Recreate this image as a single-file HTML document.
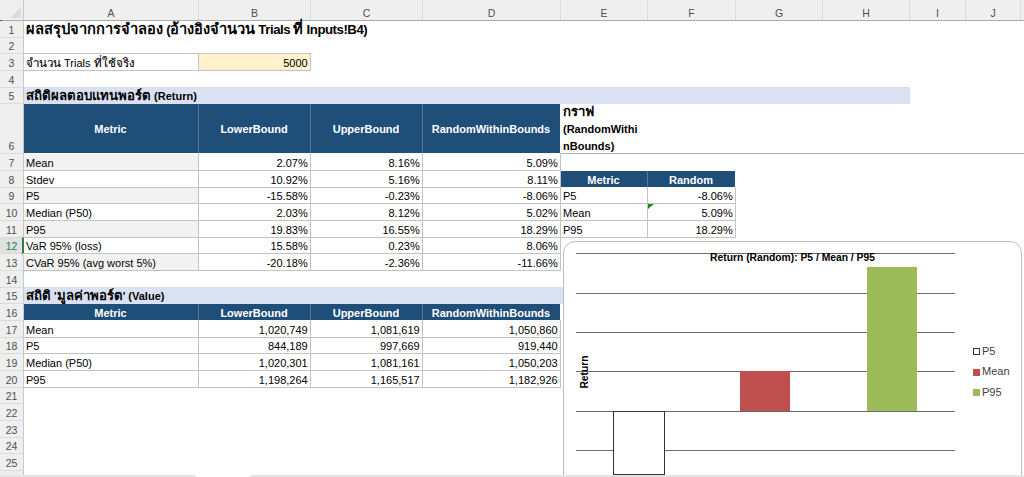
<!DOCTYPE html>
<html><head><meta charset="utf-8"><style>
html,body{margin:0;padding:0;width:1024px;height:477px;overflow:hidden;background:#fff;font-family:"Liberation Sans",sans-serif;}
.th{font-size:1.05em;-webkit-text-stroke:0.12px}
.b .th{font-size:1.2em;-webkit-text-stroke:0}
.lt{font-size:13.2px;letter-spacing:-0.45px}
#r{position:relative;width:1024px;height:477px;overflow:hidden}
</style></head><body><div id="r">
<div style="position:absolute;left:0px;top:0px;width:1024px;height:20px;background:#EFEFEF;"></div>
<div style="position:absolute;left:0px;top:20px;width:23px;height:457px;background:#EFEFEF;"></div>
<svg style="position:absolute;left:0;top:0" width="24" height="20"><polygon points="21,7 21,18 10,18" fill="#DCDCDC"/></svg>
<div style="position:absolute;left:0px;top:20px;width:1024px;height:1px;background:#ABABAB;"></div>
<div style="position:absolute;left:23px;top:0px;width:1px;height:477px;background:#C8C8C8;"></div>
<div style="position:absolute;left:0px;top:20px;width:2px;height:1px;background:#555;"></div>
<div style="position:absolute;left:198px;top:0px;width:1px;height:20px;background:#DCDCDC;"></div>
<div class="" style="position:absolute;left:23.5px;width:175.0px;text-align:center;top:3.36px;line-height:20px;height:20px;font-size:10.5px;font-weight:normal;color:#505050;white-space:nowrap;letter-spacing:0px;">A</div>
<div style="position:absolute;left:310px;top:0px;width:1px;height:20px;background:#DCDCDC;"></div>
<div class="" style="position:absolute;left:198.5px;width:112.0px;text-align:center;top:3.36px;line-height:20px;height:20px;font-size:10.5px;font-weight:normal;color:#505050;white-space:nowrap;letter-spacing:0px;">B</div>
<div style="position:absolute;left:422px;top:0px;width:1px;height:20px;background:#DCDCDC;"></div>
<div class="" style="position:absolute;left:310.5px;width:112.0px;text-align:center;top:3.36px;line-height:20px;height:20px;font-size:10.5px;font-weight:normal;color:#505050;white-space:nowrap;letter-spacing:0px;">C</div>
<div style="position:absolute;left:560px;top:0px;width:1px;height:20px;background:#DCDCDC;"></div>
<div class="" style="position:absolute;left:422.5px;width:138.0px;text-align:center;top:3.36px;line-height:20px;height:20px;font-size:10.5px;font-weight:normal;color:#505050;white-space:nowrap;letter-spacing:0px;">D</div>
<div style="position:absolute;left:647px;top:0px;width:1px;height:20px;background:#DCDCDC;"></div>
<div class="" style="position:absolute;left:560.5px;width:87.0px;text-align:center;top:3.36px;line-height:20px;height:20px;font-size:10.5px;font-weight:normal;color:#505050;white-space:nowrap;letter-spacing:0px;">E</div>
<div style="position:absolute;left:735px;top:0px;width:1px;height:20px;background:#DCDCDC;"></div>
<div class="" style="position:absolute;left:647.5px;width:88.0px;text-align:center;top:3.36px;line-height:20px;height:20px;font-size:10.5px;font-weight:normal;color:#505050;white-space:nowrap;letter-spacing:0px;">F</div>
<div style="position:absolute;left:822px;top:0px;width:1px;height:20px;background:#DCDCDC;"></div>
<div class="" style="position:absolute;left:735.5px;width:87.0px;text-align:center;top:3.36px;line-height:20px;height:20px;font-size:10.5px;font-weight:normal;color:#505050;white-space:nowrap;letter-spacing:0px;">G</div>
<div style="position:absolute;left:909px;top:0px;width:1px;height:20px;background:#DCDCDC;"></div>
<div class="" style="position:absolute;left:822.5px;width:87.0px;text-align:center;top:3.36px;line-height:20px;height:20px;font-size:10.5px;font-weight:normal;color:#505050;white-space:nowrap;letter-spacing:0px;">H</div>
<div style="position:absolute;left:965px;top:0px;width:1px;height:20px;background:#DCDCDC;"></div>
<div class="" style="position:absolute;left:909.5px;width:56.0px;text-align:center;top:3.36px;line-height:20px;height:20px;font-size:10.5px;font-weight:normal;color:#505050;white-space:nowrap;letter-spacing:0px;">I</div>
<div style="position:absolute;left:1020px;top:0px;width:1px;height:20px;background:#DCDCDC;"></div>
<div class="" style="position:absolute;left:965.5px;width:55.0px;text-align:center;top:3.36px;line-height:20px;height:20px;font-size:10.5px;font-weight:normal;color:#505050;white-space:nowrap;letter-spacing:0px;">J</div>
<div style="position:absolute;left:0px;top:37px;width:23px;height:1px;background:#DCDCDC;"></div>
<div class="" style="position:absolute;left:0px;width:23px;text-align:center;top:20.06px;line-height:20px;height:20px;font-size:10.5px;font-weight:normal;color:#505050;white-space:nowrap;letter-spacing:0px;">1</div>
<div style="position:absolute;left:0px;top:53px;width:23px;height:1px;background:#DCDCDC;"></div>
<div class="" style="position:absolute;left:0px;width:23px;text-align:center;top:36.06px;line-height:20px;height:20px;font-size:10.5px;font-weight:normal;color:#505050;white-space:nowrap;letter-spacing:0px;">2</div>
<div style="position:absolute;left:0px;top:70px;width:23px;height:1px;background:#DCDCDC;"></div>
<div class="" style="position:absolute;left:0px;width:23px;text-align:center;top:53.06px;line-height:20px;height:20px;font-size:10.5px;font-weight:normal;color:#505050;white-space:nowrap;letter-spacing:0px;">3</div>
<div style="position:absolute;left:0px;top:87px;width:23px;height:1px;background:#DCDCDC;"></div>
<div class="" style="position:absolute;left:0px;width:23px;text-align:center;top:70.06px;line-height:20px;height:20px;font-size:10.5px;font-weight:normal;color:#505050;white-space:nowrap;letter-spacing:0px;">4</div>
<div style="position:absolute;left:0px;top:103px;width:23px;height:1px;background:#DCDCDC;"></div>
<div class="" style="position:absolute;left:0px;width:23px;text-align:center;top:86.06px;line-height:20px;height:20px;font-size:10.5px;font-weight:normal;color:#505050;white-space:nowrap;letter-spacing:0px;">5</div>
<div style="position:absolute;left:0px;top:153px;width:23px;height:1px;background:#DCDCDC;"></div>
<div class="" style="position:absolute;left:0px;width:23px;text-align:center;top:136.06px;line-height:20px;height:20px;font-size:10.5px;font-weight:normal;color:#505050;white-space:nowrap;letter-spacing:0px;">6</div>
<div style="position:absolute;left:0px;top:170px;width:23px;height:1px;background:#DCDCDC;"></div>
<div class="" style="position:absolute;left:0px;width:23px;text-align:center;top:153.06px;line-height:20px;height:20px;font-size:10.5px;font-weight:normal;color:#505050;white-space:nowrap;letter-spacing:0px;">7</div>
<div style="position:absolute;left:0px;top:187px;width:23px;height:1px;background:#DCDCDC;"></div>
<div class="" style="position:absolute;left:0px;width:23px;text-align:center;top:170.06px;line-height:20px;height:20px;font-size:10.5px;font-weight:normal;color:#505050;white-space:nowrap;letter-spacing:0px;">8</div>
<div style="position:absolute;left:0px;top:203px;width:23px;height:1px;background:#DCDCDC;"></div>
<div class="" style="position:absolute;left:0px;width:23px;text-align:center;top:186.06px;line-height:20px;height:20px;font-size:10.5px;font-weight:normal;color:#505050;white-space:nowrap;letter-spacing:0px;">9</div>
<div style="position:absolute;left:0px;top:220px;width:23px;height:1px;background:#DCDCDC;"></div>
<div class="" style="position:absolute;left:0px;width:23px;text-align:center;top:203.06px;line-height:20px;height:20px;font-size:10.5px;font-weight:normal;color:#505050;white-space:nowrap;letter-spacing:0px;">10</div>
<div style="position:absolute;left:0px;top:237px;width:23px;height:1px;background:#DCDCDC;"></div>
<div class="" style="position:absolute;left:0px;width:23px;text-align:center;top:220.06px;line-height:20px;height:20px;font-size:10.5px;font-weight:normal;color:#505050;white-space:nowrap;letter-spacing:0px;">11</div>
<div style="position:absolute;left:0px;top:253px;width:23px;height:1px;background:#DCDCDC;"></div>
<div style="position:absolute;left:0px;top:238px;width:23px;height:15px;background:#E1E1E1;"></div>
<div class="" style="position:absolute;left:0px;width:23px;text-align:center;top:236.06px;line-height:20px;height:20px;font-size:10.5px;font-weight:normal;color:#2A7F4F;white-space:nowrap;letter-spacing:0px;">12</div>
<div style="position:absolute;left:0px;top:270px;width:23px;height:1px;background:#DCDCDC;"></div>
<div class="" style="position:absolute;left:0px;width:23px;text-align:center;top:253.06px;line-height:20px;height:20px;font-size:10.5px;font-weight:normal;color:#505050;white-space:nowrap;letter-spacing:0px;">13</div>
<div style="position:absolute;left:0px;top:287px;width:23px;height:1px;background:#DCDCDC;"></div>
<div class="" style="position:absolute;left:0px;width:23px;text-align:center;top:270.06px;line-height:20px;height:20px;font-size:10.5px;font-weight:normal;color:#505050;white-space:nowrap;letter-spacing:0px;">14</div>
<div style="position:absolute;left:0px;top:303px;width:23px;height:1px;background:#DCDCDC;"></div>
<div class="" style="position:absolute;left:0px;width:23px;text-align:center;top:286.06px;line-height:20px;height:20px;font-size:10.5px;font-weight:normal;color:#505050;white-space:nowrap;letter-spacing:0px;">15</div>
<div style="position:absolute;left:0px;top:320px;width:23px;height:1px;background:#DCDCDC;"></div>
<div class="" style="position:absolute;left:0px;width:23px;text-align:center;top:303.06px;line-height:20px;height:20px;font-size:10.5px;font-weight:normal;color:#505050;white-space:nowrap;letter-spacing:0px;">16</div>
<div style="position:absolute;left:0px;top:337px;width:23px;height:1px;background:#DCDCDC;"></div>
<div class="" style="position:absolute;left:0px;width:23px;text-align:center;top:320.06px;line-height:20px;height:20px;font-size:10.5px;font-weight:normal;color:#505050;white-space:nowrap;letter-spacing:0px;">17</div>
<div style="position:absolute;left:0px;top:353px;width:23px;height:1px;background:#DCDCDC;"></div>
<div class="" style="position:absolute;left:0px;width:23px;text-align:center;top:336.06px;line-height:20px;height:20px;font-size:10.5px;font-weight:normal;color:#505050;white-space:nowrap;letter-spacing:0px;">18</div>
<div style="position:absolute;left:0px;top:370px;width:23px;height:1px;background:#DCDCDC;"></div>
<div class="" style="position:absolute;left:0px;width:23px;text-align:center;top:353.06px;line-height:20px;height:20px;font-size:10.5px;font-weight:normal;color:#505050;white-space:nowrap;letter-spacing:0px;">19</div>
<div style="position:absolute;left:0px;top:387px;width:23px;height:1px;background:#DCDCDC;"></div>
<div class="" style="position:absolute;left:0px;width:23px;text-align:center;top:370.06px;line-height:20px;height:20px;font-size:10.5px;font-weight:normal;color:#505050;white-space:nowrap;letter-spacing:0px;">20</div>
<div style="position:absolute;left:0px;top:403px;width:23px;height:1px;background:#DCDCDC;"></div>
<div class="" style="position:absolute;left:0px;width:23px;text-align:center;top:386.06px;line-height:20px;height:20px;font-size:10.5px;font-weight:normal;color:#505050;white-space:nowrap;letter-spacing:0px;">21</div>
<div style="position:absolute;left:0px;top:420px;width:23px;height:1px;background:#DCDCDC;"></div>
<div class="" style="position:absolute;left:0px;width:23px;text-align:center;top:403.06px;line-height:20px;height:20px;font-size:10.5px;font-weight:normal;color:#505050;white-space:nowrap;letter-spacing:0px;">22</div>
<div style="position:absolute;left:0px;top:437px;width:23px;height:1px;background:#DCDCDC;"></div>
<div class="" style="position:absolute;left:0px;width:23px;text-align:center;top:420.06px;line-height:20px;height:20px;font-size:10.5px;font-weight:normal;color:#505050;white-space:nowrap;letter-spacing:0px;">23</div>
<div style="position:absolute;left:0px;top:453px;width:23px;height:1px;background:#DCDCDC;"></div>
<div class="" style="position:absolute;left:0px;width:23px;text-align:center;top:436.06px;line-height:20px;height:20px;font-size:10.5px;font-weight:normal;color:#505050;white-space:nowrap;letter-spacing:0px;">24</div>
<div style="position:absolute;left:0px;top:470px;width:23px;height:1px;background:#DCDCDC;"></div>
<div class="" style="position:absolute;left:0px;width:23px;text-align:center;top:453.06px;line-height:20px;height:20px;font-size:10.5px;font-weight:normal;color:#505050;white-space:nowrap;letter-spacing:0px;">25</div>
<div style="position:absolute;left:22px;top:237px;width:2px;height:17px;background:#2A7F4F;"></div>
<div class="b" style="position:absolute;left:26px;top:19.1px;line-height:20px;height:20px;font-size:14.64px;font-weight:bold;white-space:nowrap"><span style="-webkit-text-stroke:0">ผลสรุปจากการจำลอง</span><span class="lt"> (</span>อ้างอิงจำนวน<span class="lt"> Trials </span>ที่<span class="lt"> Inputs!B4)</span></div>
<div style="position:absolute;left:198px;top:53px;width:112px;height:17px;background:#FFF2CC;"></div>
<div style="position:absolute;left:23px;top:53px;width:288px;height:1px;background:#C3C3C3;"></div>
<div style="position:absolute;left:23px;top:70px;width:288px;height:1px;background:#C3C3C3;"></div>
<div style="position:absolute;left:198px;top:53px;width:1px;height:17px;background:#C3C3C3;"></div>
<div style="position:absolute;left:310px;top:53px;width:1px;height:17px;background:#C3C3C3;"></div>
<div class="" style="position:absolute;left:26px;top:52.89px;line-height:20px;height:20px;font-size:11px;font-weight:normal;color:#000;white-space:nowrap;letter-spacing:0px;"><span class="th">จำนวน</span> Trials <span class="th">ที่ใช้จริง</span></div>
<div class="" style="position:absolute;left:198px;width:109.7px;text-align:right;top:52.89px;line-height:20px;height:20px;font-size:11px;font-weight:normal;color:#000;white-space:nowrap;letter-spacing:0px;">5000</div>
<div style="position:absolute;left:24px;top:87px;width:886px;height:17px;background:#D9E1F2;"></div>
<div class="b" style="position:absolute;left:26px;top:85.89px;line-height:20px;height:20px;font-size:11px;font-weight:bold;color:#000;white-space:nowrap;letter-spacing:0px;"><span class="th">สถิติผลตอบแทนพอร์ต</span> (Return)</div>
<div style="position:absolute;left:24px;top:104px;width:536px;height:49px;background:#1F4E79;"></div>
<div style="position:absolute;left:198px;top:104px;width:1px;height:49px;background:#5B7A99;"></div>
<div style="position:absolute;left:310px;top:104px;width:1px;height:49px;background:#5B7A99;"></div>
<div style="position:absolute;left:422px;top:104px;width:1px;height:49px;background:#5B7A99;"></div>
<div class="b" style="position:absolute;left:23px;width:175px;text-align:center;top:119.19px;line-height:20px;height:20px;font-size:11px;font-weight:bold;color:#fff;white-space:nowrap;letter-spacing:0px;">Metric</div>
<div class="b" style="position:absolute;left:198px;width:112px;text-align:center;top:119.19px;line-height:20px;height:20px;font-size:11px;font-weight:bold;color:#fff;white-space:nowrap;letter-spacing:0px;">LowerBound</div>
<div class="b" style="position:absolute;left:310px;width:112px;text-align:center;top:119.19px;line-height:20px;height:20px;font-size:11px;font-weight:bold;color:#fff;white-space:nowrap;letter-spacing:0px;">UpperBound</div>
<div class="b" style="position:absolute;left:422px;width:138px;text-align:center;top:119.19px;line-height:20px;height:20px;font-size:11px;font-weight:bold;color:#fff;white-space:nowrap;letter-spacing:0px;">RandomWithinBounds</div>
<div class="b" style="position:absolute;left:563px;top:102.19px;line-height:20px;height:20px;font-size:11px;font-weight:bold;color:#000;white-space:nowrap;letter-spacing:0px;"><span class="th">กราฟ</span></div>
<div class="b" style="position:absolute;left:563px;top:119.19px;line-height:20px;height:20px;font-size:11px;font-weight:bold;color:#000;white-space:nowrap;letter-spacing:0px;">(RandomWithi</div>
<div class="b" style="position:absolute;left:563px;top:136.19px;line-height:20px;height:20px;font-size:11px;font-weight:bold;color:#000;white-space:nowrap;letter-spacing:0px;">nBounds)</div>
<div style="position:absolute;left:560px;top:153px;width:464px;height:1px;background:#B0B0B0;"></div>
<div style="position:absolute;left:24px;top:154px;width:174px;height:16px;background:#F2F2F2;"></div>
<div style="position:absolute;left:23px;top:170px;width:538px;height:1px;background:#C3C3C3;"></div>
<div style="position:absolute;left:198px;top:153px;width:1px;height:18px;background:#C3C3C3;"></div>
<div style="position:absolute;left:310px;top:153px;width:1px;height:18px;background:#C3C3C3;"></div>
<div style="position:absolute;left:422px;top:153px;width:1px;height:18px;background:#C3C3C3;"></div>
<div style="position:absolute;left:560px;top:153px;width:1px;height:18px;background:#C3C3C3;"></div>
<div class="" style="position:absolute;left:26px;top:152.89px;line-height:20px;height:20px;font-size:11px;font-weight:normal;color:#000;white-space:nowrap;letter-spacing:0px;">Mean</div>
<div class="" style="position:absolute;left:198px;width:109.7px;text-align:right;top:152.89px;line-height:20px;height:20px;font-size:11px;font-weight:normal;color:#000;white-space:nowrap;letter-spacing:0px;">2.07%</div>
<div class="" style="position:absolute;left:310px;width:109.7px;text-align:right;top:152.89px;line-height:20px;height:20px;font-size:11px;font-weight:normal;color:#000;white-space:nowrap;letter-spacing:0px;">8.16%</div>
<div class="" style="position:absolute;left:422px;width:135.7px;text-align:right;top:152.89px;line-height:20px;height:20px;font-size:11px;font-weight:normal;color:#000;white-space:nowrap;letter-spacing:0px;">5.09%</div>
<div style="position:absolute;left:23px;top:187px;width:538px;height:1px;background:#C3C3C3;"></div>
<div style="position:absolute;left:198px;top:170px;width:1px;height:18px;background:#C3C3C3;"></div>
<div style="position:absolute;left:310px;top:170px;width:1px;height:18px;background:#C3C3C3;"></div>
<div style="position:absolute;left:422px;top:170px;width:1px;height:18px;background:#C3C3C3;"></div>
<div style="position:absolute;left:560px;top:170px;width:1px;height:18px;background:#C3C3C3;"></div>
<div class="" style="position:absolute;left:26px;top:169.89px;line-height:20px;height:20px;font-size:11px;font-weight:normal;color:#000;white-space:nowrap;letter-spacing:0px;">Stdev</div>
<div class="" style="position:absolute;left:198px;width:109.7px;text-align:right;top:169.89px;line-height:20px;height:20px;font-size:11px;font-weight:normal;color:#000;white-space:nowrap;letter-spacing:0px;">10.92%</div>
<div class="" style="position:absolute;left:310px;width:109.7px;text-align:right;top:169.89px;line-height:20px;height:20px;font-size:11px;font-weight:normal;color:#000;white-space:nowrap;letter-spacing:0px;">5.16%</div>
<div class="" style="position:absolute;left:422px;width:135.7px;text-align:right;top:169.89px;line-height:20px;height:20px;font-size:11px;font-weight:normal;color:#000;white-space:nowrap;letter-spacing:0px;">8.11%</div>
<div style="position:absolute;left:24px;top:188px;width:174px;height:15px;background:#F2F2F2;"></div>
<div style="position:absolute;left:23px;top:203px;width:538px;height:1px;background:#C3C3C3;"></div>
<div style="position:absolute;left:198px;top:187px;width:1px;height:17px;background:#C3C3C3;"></div>
<div style="position:absolute;left:310px;top:187px;width:1px;height:17px;background:#C3C3C3;"></div>
<div style="position:absolute;left:422px;top:187px;width:1px;height:17px;background:#C3C3C3;"></div>
<div style="position:absolute;left:560px;top:187px;width:1px;height:17px;background:#C3C3C3;"></div>
<div class="" style="position:absolute;left:26px;top:185.89px;line-height:20px;height:20px;font-size:11px;font-weight:normal;color:#000;white-space:nowrap;letter-spacing:0px;">P5</div>
<div class="" style="position:absolute;left:198px;width:109.7px;text-align:right;top:185.89px;line-height:20px;height:20px;font-size:11px;font-weight:normal;color:#000;white-space:nowrap;letter-spacing:0px;">-15.58%</div>
<div class="" style="position:absolute;left:310px;width:109.7px;text-align:right;top:185.89px;line-height:20px;height:20px;font-size:11px;font-weight:normal;color:#000;white-space:nowrap;letter-spacing:0px;">-0.23%</div>
<div class="" style="position:absolute;left:422px;width:135.7px;text-align:right;top:185.89px;line-height:20px;height:20px;font-size:11px;font-weight:normal;color:#000;white-space:nowrap;letter-spacing:0px;">-8.06%</div>
<div style="position:absolute;left:23px;top:220px;width:538px;height:1px;background:#C3C3C3;"></div>
<div style="position:absolute;left:198px;top:203px;width:1px;height:18px;background:#C3C3C3;"></div>
<div style="position:absolute;left:310px;top:203px;width:1px;height:18px;background:#C3C3C3;"></div>
<div style="position:absolute;left:422px;top:203px;width:1px;height:18px;background:#C3C3C3;"></div>
<div style="position:absolute;left:560px;top:203px;width:1px;height:18px;background:#C3C3C3;"></div>
<div class="" style="position:absolute;left:26px;top:202.89px;line-height:20px;height:20px;font-size:11px;font-weight:normal;color:#000;white-space:nowrap;letter-spacing:0px;">Median (P50)</div>
<div class="" style="position:absolute;left:198px;width:109.7px;text-align:right;top:202.89px;line-height:20px;height:20px;font-size:11px;font-weight:normal;color:#000;white-space:nowrap;letter-spacing:0px;">2.03%</div>
<div class="" style="position:absolute;left:310px;width:109.7px;text-align:right;top:202.89px;line-height:20px;height:20px;font-size:11px;font-weight:normal;color:#000;white-space:nowrap;letter-spacing:0px;">8.12%</div>
<div class="" style="position:absolute;left:422px;width:135.7px;text-align:right;top:202.89px;line-height:20px;height:20px;font-size:11px;font-weight:normal;color:#000;white-space:nowrap;letter-spacing:0px;">5.02%</div>
<div style="position:absolute;left:24px;top:221px;width:174px;height:16px;background:#F2F2F2;"></div>
<div style="position:absolute;left:23px;top:237px;width:538px;height:1px;background:#C3C3C3;"></div>
<div style="position:absolute;left:198px;top:220px;width:1px;height:18px;background:#C3C3C3;"></div>
<div style="position:absolute;left:310px;top:220px;width:1px;height:18px;background:#C3C3C3;"></div>
<div style="position:absolute;left:422px;top:220px;width:1px;height:18px;background:#C3C3C3;"></div>
<div style="position:absolute;left:560px;top:220px;width:1px;height:18px;background:#C3C3C3;"></div>
<div class="" style="position:absolute;left:26px;top:219.89px;line-height:20px;height:20px;font-size:11px;font-weight:normal;color:#000;white-space:nowrap;letter-spacing:0px;">P95</div>
<div class="" style="position:absolute;left:198px;width:109.7px;text-align:right;top:219.89px;line-height:20px;height:20px;font-size:11px;font-weight:normal;color:#000;white-space:nowrap;letter-spacing:0px;">19.83%</div>
<div class="" style="position:absolute;left:310px;width:109.7px;text-align:right;top:219.89px;line-height:20px;height:20px;font-size:11px;font-weight:normal;color:#000;white-space:nowrap;letter-spacing:0px;">16.55%</div>
<div class="" style="position:absolute;left:422px;width:135.7px;text-align:right;top:219.89px;line-height:20px;height:20px;font-size:11px;font-weight:normal;color:#000;white-space:nowrap;letter-spacing:0px;">18.29%</div>
<div style="position:absolute;left:23px;top:253px;width:538px;height:1px;background:#C3C3C3;"></div>
<div style="position:absolute;left:198px;top:237px;width:1px;height:17px;background:#C3C3C3;"></div>
<div style="position:absolute;left:310px;top:237px;width:1px;height:17px;background:#C3C3C3;"></div>
<div style="position:absolute;left:422px;top:237px;width:1px;height:17px;background:#C3C3C3;"></div>
<div style="position:absolute;left:560px;top:237px;width:1px;height:17px;background:#C3C3C3;"></div>
<div class="" style="position:absolute;left:26px;top:235.89px;line-height:20px;height:20px;font-size:11px;font-weight:normal;color:#000;white-space:nowrap;letter-spacing:0px;">VaR 95% (loss)</div>
<div class="" style="position:absolute;left:198px;width:109.7px;text-align:right;top:235.89px;line-height:20px;height:20px;font-size:11px;font-weight:normal;color:#000;white-space:nowrap;letter-spacing:0px;">15.58%</div>
<div class="" style="position:absolute;left:310px;width:109.7px;text-align:right;top:235.89px;line-height:20px;height:20px;font-size:11px;font-weight:normal;color:#000;white-space:nowrap;letter-spacing:0px;">0.23%</div>
<div class="" style="position:absolute;left:422px;width:135.7px;text-align:right;top:235.89px;line-height:20px;height:20px;font-size:11px;font-weight:normal;color:#000;white-space:nowrap;letter-spacing:0px;">8.06%</div>
<div style="position:absolute;left:24px;top:254px;width:174px;height:16px;background:#F2F2F2;"></div>
<div style="position:absolute;left:23px;top:270px;width:538px;height:1px;background:#C3C3C3;"></div>
<div style="position:absolute;left:198px;top:253px;width:1px;height:18px;background:#C3C3C3;"></div>
<div style="position:absolute;left:310px;top:253px;width:1px;height:18px;background:#C3C3C3;"></div>
<div style="position:absolute;left:422px;top:253px;width:1px;height:18px;background:#C3C3C3;"></div>
<div style="position:absolute;left:560px;top:253px;width:1px;height:18px;background:#C3C3C3;"></div>
<div class="" style="position:absolute;left:26px;top:252.89px;line-height:20px;height:20px;font-size:11px;font-weight:normal;color:#000;white-space:nowrap;letter-spacing:0px;">CVaR 95% (avg worst 5%)</div>
<div class="" style="position:absolute;left:198px;width:109.7px;text-align:right;top:252.89px;line-height:20px;height:20px;font-size:11px;font-weight:normal;color:#000;white-space:nowrap;letter-spacing:0px;">-20.18%</div>
<div class="" style="position:absolute;left:310px;width:109.7px;text-align:right;top:252.89px;line-height:20px;height:20px;font-size:11px;font-weight:normal;color:#000;white-space:nowrap;letter-spacing:0px;">-2.36%</div>
<div class="" style="position:absolute;left:422px;width:135.7px;text-align:right;top:252.89px;line-height:20px;height:20px;font-size:11px;font-weight:normal;color:#000;white-space:nowrap;letter-spacing:0px;">-11.66%</div>
<div style="position:absolute;left:561px;top:171px;width:174px;height:16px;background:#1F4E79;"></div>
<div style="position:absolute;left:647px;top:171px;width:1px;height:16px;background:#5B7A99;"></div>
<div class="b" style="position:absolute;left:560px;width:87px;text-align:center;top:169.89px;line-height:20px;height:20px;font-size:11px;font-weight:bold;color:#fff;white-space:nowrap;letter-spacing:0px;">Metric</div>
<div class="b" style="position:absolute;left:647px;width:88px;text-align:center;top:169.89px;line-height:20px;height:20px;font-size:11px;font-weight:bold;color:#fff;white-space:nowrap;letter-spacing:0px;">Random</div>
<div style="position:absolute;left:560px;top:203px;width:176px;height:1px;background:#C3C3C3;"></div>
<div style="position:absolute;left:647px;top:187px;width:1px;height:17px;background:#C3C3C3;"></div>
<div style="position:absolute;left:735px;top:187px;width:1px;height:17px;background:#C3C3C3;"></div>
<div class="" style="position:absolute;left:563px;top:185.89px;line-height:20px;height:20px;font-size:11px;font-weight:normal;color:#000;white-space:nowrap;letter-spacing:0px;">P5</div>
<div class="" style="position:absolute;left:647px;width:85.7px;text-align:right;top:185.89px;line-height:20px;height:20px;font-size:11px;font-weight:normal;color:#000;white-space:nowrap;letter-spacing:0px;">-8.06%</div>
<div style="position:absolute;left:560px;top:220px;width:176px;height:1px;background:#C3C3C3;"></div>
<div style="position:absolute;left:647px;top:203px;width:1px;height:18px;background:#C3C3C3;"></div>
<div style="position:absolute;left:735px;top:203px;width:1px;height:18px;background:#C3C3C3;"></div>
<div class="" style="position:absolute;left:563px;top:202.89px;line-height:20px;height:20px;font-size:11px;font-weight:normal;color:#000;white-space:nowrap;letter-spacing:0px;">Mean</div>
<div class="" style="position:absolute;left:647px;width:85.7px;text-align:right;top:202.89px;line-height:20px;height:20px;font-size:11px;font-weight:normal;color:#000;white-space:nowrap;letter-spacing:0px;">5.09%</div>
<div style="position:absolute;left:560px;top:237px;width:176px;height:1px;background:#C3C3C3;"></div>
<div style="position:absolute;left:647px;top:220px;width:1px;height:18px;background:#C3C3C3;"></div>
<div style="position:absolute;left:735px;top:220px;width:1px;height:18px;background:#C3C3C3;"></div>
<div class="" style="position:absolute;left:563px;top:219.89px;line-height:20px;height:20px;font-size:11px;font-weight:normal;color:#000;white-space:nowrap;letter-spacing:0px;">P95</div>
<div class="" style="position:absolute;left:647px;width:85.7px;text-align:right;top:219.89px;line-height:20px;height:20px;font-size:11px;font-weight:normal;color:#000;white-space:nowrap;letter-spacing:0px;">18.29%</div>
<svg style="position:absolute;left:648px;top:204px" width="6" height="6"><polygon points="0,0 6,0 0,5" fill="#1E8C1E"/></svg>
<div style="position:absolute;left:24px;top:287px;width:885px;height:17px;background:#D9E1F2;"></div>
<div class="b" style="position:absolute;left:26px;top:285.89px;line-height:20px;height:20px;font-size:11px;font-weight:bold;color:#000;white-space:nowrap;letter-spacing:0px;"><span class="th">สถิติ</span> '<span class="th">มูลค่าพอร์ต</span>' (Value)</div>
<div style="position:absolute;left:24px;top:304px;width:536px;height:16px;background:#1F4E79;"></div>
<div style="position:absolute;left:198px;top:304px;width:1px;height:16px;background:#5B7A99;"></div>
<div style="position:absolute;left:310px;top:304px;width:1px;height:16px;background:#5B7A99;"></div>
<div style="position:absolute;left:422px;top:304px;width:1px;height:16px;background:#5B7A99;"></div>
<div class="b" style="position:absolute;left:23px;width:175px;text-align:center;top:302.89px;line-height:20px;height:20px;font-size:11px;font-weight:bold;color:#fff;white-space:nowrap;letter-spacing:0px;">Metric</div>
<div class="b" style="position:absolute;left:198px;width:112px;text-align:center;top:302.89px;line-height:20px;height:20px;font-size:11px;font-weight:bold;color:#fff;white-space:nowrap;letter-spacing:0px;">LowerBound</div>
<div class="b" style="position:absolute;left:310px;width:112px;text-align:center;top:302.89px;line-height:20px;height:20px;font-size:11px;font-weight:bold;color:#fff;white-space:nowrap;letter-spacing:0px;">UpperBound</div>
<div class="b" style="position:absolute;left:422px;width:138px;text-align:center;top:302.89px;line-height:20px;height:20px;font-size:11px;font-weight:bold;color:#fff;white-space:nowrap;letter-spacing:0px;">RandomWithinBounds</div>
<div style="position:absolute;left:23px;top:337px;width:538px;height:1px;background:#C3C3C3;"></div>
<div style="position:absolute;left:198px;top:320px;width:1px;height:18px;background:#C3C3C3;"></div>
<div style="position:absolute;left:310px;top:320px;width:1px;height:18px;background:#C3C3C3;"></div>
<div style="position:absolute;left:422px;top:320px;width:1px;height:18px;background:#C3C3C3;"></div>
<div style="position:absolute;left:560px;top:320px;width:1px;height:18px;background:#C3C3C3;"></div>
<div class="" style="position:absolute;left:26px;top:319.89px;line-height:20px;height:20px;font-size:11px;font-weight:normal;color:#000;white-space:nowrap;letter-spacing:0px;">Mean</div>
<div class="" style="position:absolute;left:198px;width:109.7px;text-align:right;top:319.89px;line-height:20px;height:20px;font-size:11px;font-weight:normal;color:#000;white-space:nowrap;letter-spacing:0px;">1,020,749</div>
<div class="" style="position:absolute;left:310px;width:109.7px;text-align:right;top:319.89px;line-height:20px;height:20px;font-size:11px;font-weight:normal;color:#000;white-space:nowrap;letter-spacing:0px;">1,081,619</div>
<div class="" style="position:absolute;left:422px;width:135.7px;text-align:right;top:319.89px;line-height:20px;height:20px;font-size:11px;font-weight:normal;color:#000;white-space:nowrap;letter-spacing:0px;">1,050,860</div>
<div style="position:absolute;left:23px;top:353px;width:538px;height:1px;background:#C3C3C3;"></div>
<div style="position:absolute;left:198px;top:337px;width:1px;height:17px;background:#C3C3C3;"></div>
<div style="position:absolute;left:310px;top:337px;width:1px;height:17px;background:#C3C3C3;"></div>
<div style="position:absolute;left:422px;top:337px;width:1px;height:17px;background:#C3C3C3;"></div>
<div style="position:absolute;left:560px;top:337px;width:1px;height:17px;background:#C3C3C3;"></div>
<div class="" style="position:absolute;left:26px;top:335.89px;line-height:20px;height:20px;font-size:11px;font-weight:normal;color:#000;white-space:nowrap;letter-spacing:0px;">P5</div>
<div class="" style="position:absolute;left:198px;width:109.7px;text-align:right;top:335.89px;line-height:20px;height:20px;font-size:11px;font-weight:normal;color:#000;white-space:nowrap;letter-spacing:0px;">844,189</div>
<div class="" style="position:absolute;left:310px;width:109.7px;text-align:right;top:335.89px;line-height:20px;height:20px;font-size:11px;font-weight:normal;color:#000;white-space:nowrap;letter-spacing:0px;">997,669</div>
<div class="" style="position:absolute;left:422px;width:135.7px;text-align:right;top:335.89px;line-height:20px;height:20px;font-size:11px;font-weight:normal;color:#000;white-space:nowrap;letter-spacing:0px;">919,440</div>
<div style="position:absolute;left:23px;top:370px;width:538px;height:1px;background:#C3C3C3;"></div>
<div style="position:absolute;left:198px;top:353px;width:1px;height:18px;background:#C3C3C3;"></div>
<div style="position:absolute;left:310px;top:353px;width:1px;height:18px;background:#C3C3C3;"></div>
<div style="position:absolute;left:422px;top:353px;width:1px;height:18px;background:#C3C3C3;"></div>
<div style="position:absolute;left:560px;top:353px;width:1px;height:18px;background:#C3C3C3;"></div>
<div class="" style="position:absolute;left:26px;top:352.89px;line-height:20px;height:20px;font-size:11px;font-weight:normal;color:#000;white-space:nowrap;letter-spacing:0px;">Median (P50)</div>
<div class="" style="position:absolute;left:198px;width:109.7px;text-align:right;top:352.89px;line-height:20px;height:20px;font-size:11px;font-weight:normal;color:#000;white-space:nowrap;letter-spacing:0px;">1,020,301</div>
<div class="" style="position:absolute;left:310px;width:109.7px;text-align:right;top:352.89px;line-height:20px;height:20px;font-size:11px;font-weight:normal;color:#000;white-space:nowrap;letter-spacing:0px;">1,081,161</div>
<div class="" style="position:absolute;left:422px;width:135.7px;text-align:right;top:352.89px;line-height:20px;height:20px;font-size:11px;font-weight:normal;color:#000;white-space:nowrap;letter-spacing:0px;">1,050,203</div>
<div style="position:absolute;left:23px;top:387px;width:538px;height:1px;background:#C3C3C3;"></div>
<div style="position:absolute;left:198px;top:370px;width:1px;height:18px;background:#C3C3C3;"></div>
<div style="position:absolute;left:310px;top:370px;width:1px;height:18px;background:#C3C3C3;"></div>
<div style="position:absolute;left:422px;top:370px;width:1px;height:18px;background:#C3C3C3;"></div>
<div style="position:absolute;left:560px;top:370px;width:1px;height:18px;background:#C3C3C3;"></div>
<div class="" style="position:absolute;left:26px;top:369.89px;line-height:20px;height:20px;font-size:11px;font-weight:normal;color:#000;white-space:nowrap;letter-spacing:0px;">P95</div>
<div class="" style="position:absolute;left:198px;width:109.7px;text-align:right;top:369.89px;line-height:20px;height:20px;font-size:11px;font-weight:normal;color:#000;white-space:nowrap;letter-spacing:0px;">1,198,264</div>
<div class="" style="position:absolute;left:310px;width:109.7px;text-align:right;top:369.89px;line-height:20px;height:20px;font-size:11px;font-weight:normal;color:#000;white-space:nowrap;letter-spacing:0px;">1,165,517</div>
<div class="" style="position:absolute;left:422px;width:135.7px;text-align:right;top:369.89px;line-height:20px;height:20px;font-size:11px;font-weight:normal;color:#000;white-space:nowrap;letter-spacing:0px;">1,182,926</div>
<div style="position:absolute;left:563px;top:241px;width:457px;height:260px;border:1px solid #BDBDBD;border-radius:12px;background:#fff"></div>
<div style="position:absolute;left:576px;top:253px;width:379px;height:1px;background:#6A6A6A;"></div>
<div style="position:absolute;left:576px;top:293px;width:379px;height:1px;background:#6A6A6A;"></div>
<div style="position:absolute;left:576px;top:332px;width:379px;height:1px;background:#6A6A6A;"></div>
<div style="position:absolute;left:576px;top:371px;width:379px;height:1px;background:#6A6A6A;"></div>
<div style="position:absolute;left:576px;top:411px;width:379px;height:1px;background:#6A6A6A;"></div>
<div style="position:absolute;left:576px;top:450px;width:379px;height:1px;background:#6A6A6A;"></div>
<div style="position:absolute;left:613px;top:411px;width:50px;height:62px;border:1px solid #333;background:#fff"></div>
<div style="position:absolute;left:740px;top:371px;width:50px;height:40px;background:#C0504D;"></div>
<div style="position:absolute;left:867px;top:267px;width:50px;height:144px;background:#9BBB59;"></div>
<div style="position:absolute;left:700px;width:185px;top:251px;height:14px;line-height:14px;text-align:center;font-size:10.3px;font-weight:bold;white-space:nowrap">Return (Random): P5 / Mean / P95</div>
<div style="position:absolute;left:563px;top:365px;width:44px;height:14px;line-height:14px;text-align:center;font-size:10.3px;font-weight:bold;transform:rotate(-90deg);white-space:nowrap">Return</div>
<div style="position:absolute;left:973px;top:348px;width:5px;height:5px;border:1px solid #333;background:#fff"></div>
<div style="position:absolute;left:973px;top:369px;width:7px;height:7px;background:#C0504D;"></div>
<div style="position:absolute;left:973px;top:389px;width:7px;height:7px;background:#9BBB59;"></div>
<div class="" style="position:absolute;left:982px;top:341.19px;line-height:20px;height:20px;font-size:11px;font-weight:normal;color:#404040;white-space:nowrap;letter-spacing:0px;">P5</div>
<div class="" style="position:absolute;left:982px;top:361.19px;line-height:20px;height:20px;font-size:11px;font-weight:normal;color:#404040;white-space:nowrap;letter-spacing:0px;">Mean</div>
<div class="" style="position:absolute;left:982px;top:382.19px;line-height:20px;height:20px;font-size:11px;font-weight:normal;color:#404040;white-space:nowrap;letter-spacing:0px;">P95</div>
<div style="position:absolute;left:0px;top:475px;width:196px;height:2px;background:#E4E4E4;border-top-right-radius:2px"></div>
<div style="position:absolute;left:250px;top:475px;width:774px;height:2px;background:#E4E4E4;border-top-left-radius:2px"></div>
</div></body></html>
